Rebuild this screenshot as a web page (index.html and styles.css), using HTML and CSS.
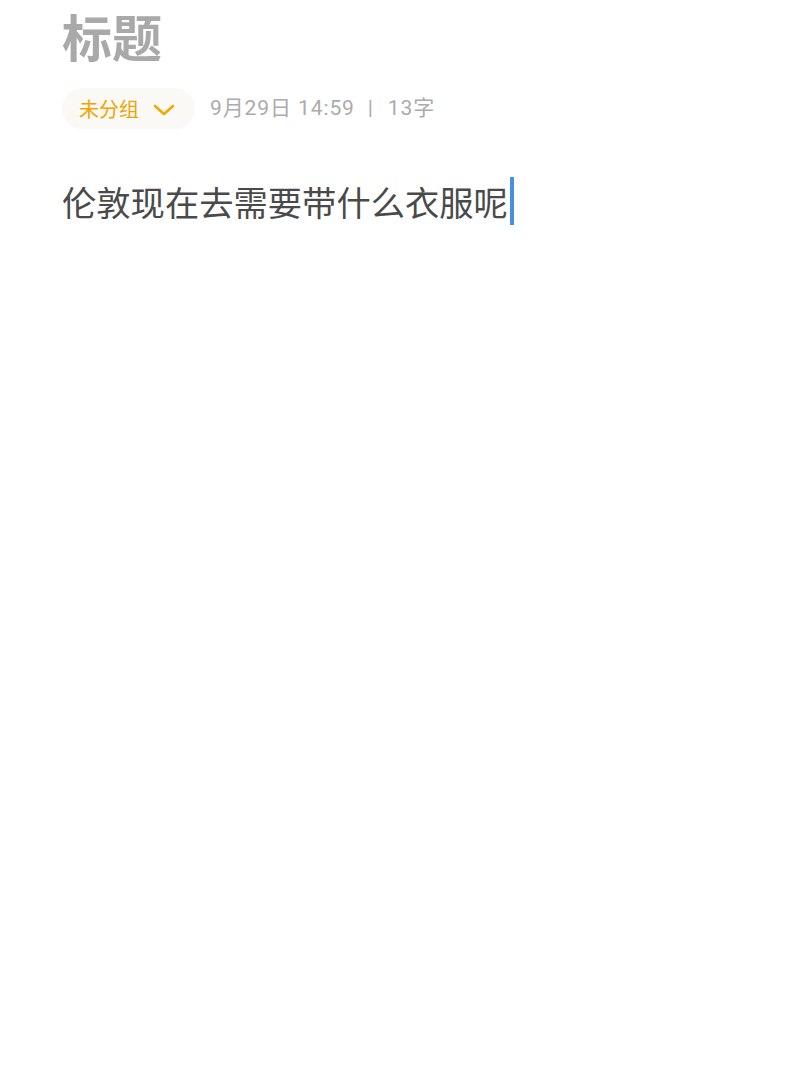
FILE: index.html
```html
<!DOCTYPE html>
<html lang="zh-CN">
<head>
<meta charset="utf-8">
<link rel="stylesheet" href="styles.css">
</head>
<body>
<div class="note">
  <h1 class="title">标题</h1>
  <div class="meta">
    <div class="group">
      <span class="group-name">未分组</span>
      <svg class="chevron" width="22" height="12" viewBox="0 0 22 12"><path d="M2 2 L11 10 L20 2" fill="none" stroke="#f2a900" stroke-width="2.6" stroke-linecap="round" stroke-linejoin="round"/></svg>
    </div>
    <div class="info">9月29日 14:59<span class="sep">|</span>13字</div>
  </div>
  <div class="content">伦敦现在去需要带什么衣服呢<span class="cursor"></span></div>
</div>
</body>
</html>
```
FILE: styles.css
```css
html, body {
  margin: 0;
  padding: 0;
  background: #ffffff;
}
body {
  width: 810px;
  height: 1080px;
  font-family: "Noto Sans CJK SC", "Noto Sans", sans-serif;
}
.note {
  padding: 7px 0 0 62px;
}
.title {
  margin: 0;
  font-size: 50px;
  line-height: 56px;
  font-weight: 700;
  color: #a9a9a9;
}
.meta {
  display: flex;
  align-items: center;
  margin-top: 25px;
}
.group {
  display: flex;
  align-items: center;
  height: 41px;
  padding: 0 20px 0 17px;
  border-radius: 21px;
  background: #faf9f6;
}
.group-name {
  font-size: 20px;
  color: #f0a400;
  line-height: 1;
}
.chevron {
  margin-left: 14px;
  margin-top: 2px;
}
.info {
  margin-left: 15px;
  font-family: "Roboto", "Noto Sans CJK SC", sans-serif;
  font-size: 21px;
  letter-spacing: 0.9px;
  color: #ababab;
  line-height: 1;
}
.sep {
  margin: 0 14px 0 13px;
}
.content {
  margin-top: 48px;
  font-size: 34.3px;
  line-height: 48px;
  color: #4a4a4a;
  display: flex;
  align-items: center;
}
.cursor {
  display: inline-block;
  width: 4px;
  height: 48px;
  margin-left: 2px;
  background: #4a90e2;
}
```
